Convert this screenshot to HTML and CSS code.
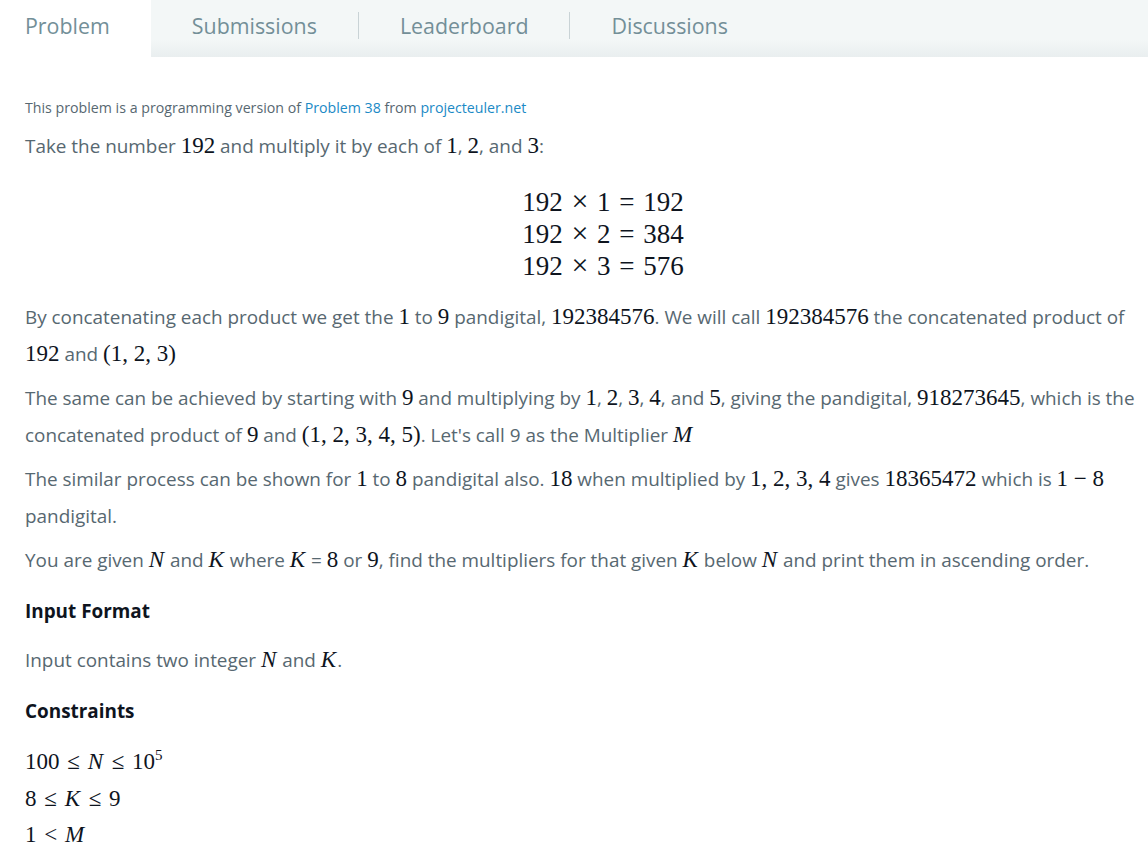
FILE: index.html
```html
<!DOCTYPE html>
<html>
<head>
<meta charset="utf-8">
<link rel="stylesheet" href="styles.css">
</head>
<body>
<nav class="tabs">
  <div class="tab active">Problem</div>
  <div class="tab">Submissions</div>
  <div class="tab sep">Leaderboard</div>
  <div class="tab sep">Discussions</div>
  <div class="tab-fill"></div>
</nav>
<main class="content">
  <p class="note">This problem is a programming version of <a href="#">Problem 38</a> from <a href="#">projecteuler.net</a></p>
  <p>Take the number <span class="m">192</span> and multiply it by each of <span class="m">1</span>, <span class="m">2</span>, and <span class="m">3</span>:</p>
  <div class="display">
    <div class="eqs">
      <div>192 <span class="op">×</span> 1 <span class="rel">=</span> 192</div>
      <div>192 <span class="op">×</span> 2 <span class="rel">=</span> 384</div>
      <div>192 <span class="op">×</span> 3 <span class="rel">=</span> 576</div>
    </div>
  </div>
  <p>By concatenating each product we get the <span class="m">1</span> to <span class="m">9</span> pandigital, <span class="m">192384576</span>. We will call <span class="m">192384576</span> the concatenated product of <span class="m">192</span> and <span class="m">(1, 2, 3)</span></p>
  <p>The same can be achieved by starting with <span class="m">9</span> and multiplying by <span class="m">1</span>, <span class="m">2</span>, <span class="m">3</span>, <span class="m">4</span>, and <span class="m">5</span>, giving the pandigital, <span class="m">918273645</span>, which is the concatenated product of <span class="m">9</span> and <span class="m">(1, 2, 3, 4, 5)</span>. Let's call 9 as the Multiplier <span class="m"><i>M</i></span></p>
  <p>The similar process can be shown for <span class="m">1</span> to <span class="m">8</span> pandigital also. <span class="m">18</span> when multiplied by <span class="m">1, 2, 3, 4</span> gives <span class="m">18365472</span> which is <span class="m">1 − 8</span> pandigital.</p>
  <p>You are given <span class="m"><i>N</i></span> and <span class="m"><i>K</i></span> where <span class="m"><i>K</i></span> = <span class="m">8</span> or <span class="m">9</span>, find the multipliers for that given <span class="m"><i>K</i></span> below <span class="m"><i>N</i></span> and print them in ascending order.</p>
  <h3>Input Format</h3>
  <p>Input contains two integer <span class="m"><i>N</i></span> and <span class="m"><i>K</i></span>.</p>
  <h3>Constraints</h3>
  <div class="cons">
    <div class="m">100 <span class="rel">≤</span> <i>N</i> <span class="rel">≤</span> 10<sup>5</sup></div>
    <div class="m">8 <span class="rel">≤</span> <i>K</i> <span class="rel">≤</span> 9</div>
    <div class="m">1 <span class="rel">&lt;</span> <i>M</i></div>
  </div>
</main>
</body>
</html>
```
FILE: styles.css
```css
html, body {
  margin: 0;
  padding: 0;
  background: #ffffff;
}
body {
  font-family: "Open Sans", "Liberation Sans", sans-serif;
  color: #576871;
  overflow: hidden;
}
.tabs {
  display: flex;
  height: 57px;
  background: linear-gradient(to bottom, #f3f7f7 0%, #f3f7f7 70%, #e9eeef 100%);
}
.tab {
  display: flex;
  align-items: center;
  height: 51px;
  padding: 0 41px;
  font-size: 21.4px;
  color: #738f98;
}
.tab.active {
  background: #ffffff;
  height: 57px;
  padding-left: 25px;
  align-items: flex-start;
  padding-top: 11px;
  box-sizing: border-box;
}
.tab.sep {
  border-left: 1px solid #c9d3d6;
  height: 27px;
  margin-top: 12px;
}
.tab-fill { flex: 1; }
.content {
  padding: 0 6px 0 25px;
}
p {
  margin: 0 0 7px;
  font-size: 18.9px;
  line-height: 37px;
}
.note {
  font-size: 14.2px;
  line-height: 20px;
  margin: 41px 0 10px;
}
a {
  color: #1b8ac6;
  text-decoration: none;
}
.m {
  font-family: "Liberation Serif", "DejaVu Serif", serif;
  font-size: 23px;
  line-height: 1;
  color: #0e141e;
}
.m i { font-style: italic; padding-right: 1px; }
.display {
  display: flex;
  justify-content: center;
  padding-left: 39px;
  margin: 21px 0 17px;
}
.eqs {
  font-family: "Liberation Serif", "DejaVu Serif", serif;
  font-size: 27px;
  line-height: 32px;
  color: #0e141e;
}
.op, .rel { padding: 0 2px; }
.op { font-size: 30px; line-height: 0; }
h3 {
  font-size: 18.9px;
  font-weight: 700;
  color: #0e141e;
  margin: 17px 0 16px;
  line-height: 30px;
}
.cons {
  margin-top: 18px;
}
.cons .m {
  line-height: 36.5px;
}
sup {
  font-size: 15px;
  line-height: 0;
}
```
